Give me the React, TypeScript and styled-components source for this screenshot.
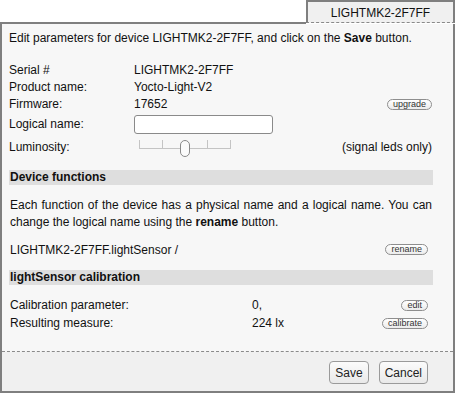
import React from "react";
import styled, { createGlobalStyle } from "styled-components";

const GlobalStyle = createGlobalStyle`
  html, body {
    margin: 0;
    padding: 0;
    background: #ffffff;
  }
  body {
    font-family: "Liberation Sans", Arial, sans-serif;
    font-size: 12px;
    color: #111111;
  }
`;

const Frame = styled.div`
  width: 455px;
  height: 393px;
  display: flex;
  flex-direction: column;
`;

const TabRow = styled.div`
  display: flex;
  height: 24px;
`;

const TabGap = styled.div`
  flex: 1;
  border-bottom: 2px solid #7f7f7f;
`;

const Tab = styled.div`
  width: 149px;
  height: 23px;
  box-sizing: border-box;
  border: 2px solid #7f7f7f;
  border-bottom: 1px dashed #8a8a8a;
  background: #f0f0f0;
  display: flex;
  align-items: center;
  justify-content: center;
  padding-top: 1px;
`;

const Panel = styled.div`
  flex: 1;
  display: flex;
  flex-direction: column;
  border: 2px solid #7f7f7f;
  border-top: none;
  background: #f0f0f0;
`;

const Body = styled.div`
  height: 328px;
  box-sizing: border-box;
  padding: 6px 0 0 7px;
  background: #f7f7f7;
  border-bottom: 1px dashed #8a8a8a;
  display: flex;
  flex-direction: column;
`;

const Content = styled.div`
  width: 424px;
  display: flex;
  flex-direction: column;
`;

const Intro = styled.div`
  line-height: 17px;
  margin-bottom: 15px;
`;

const PropGrid = styled.div`
  display: grid;
  grid-template-columns: 125px 1fr auto;
  align-items: center;
  margin-bottom: 11px;
`;

const Cell = styled.div<{ $h?: number }>`
  height: ${(p) => p.$h ?? 17}px;
  line-height: ${(p) => p.$h ?? 17}px;
  display: flex;
  align-items: center;
  white-space: nowrap;
`;

const RightCell = styled(Cell)`
  justify-content: flex-end;
  padding-right: 1px;
`;

const TextInput = styled.input`
  width: 139px;
  height: 19px;
  box-sizing: border-box;
  border: 1px solid #8a8a8a;
  border-radius: 3px;
  background: #ffffff;
  padding: 0 3px;
  margin: 0;
  font: inherit;
`;

const Slider = styled.div`
  position: relative;
  width: 92px;
  height: 19px;
  margin-left: 5px;
  margin-top: 2px;
`;

const Ticks = styled.div`
  display: flex;
  justify-content: space-between;
  height: 8px;
  margin-top: 1px;
  border-bottom: 1px solid #c4c4c4;
`;

const Tick = styled.span`
  width: 1px;
  height: 8px;
  background: #c4c4c4;
`;

const Thumb = styled.div`
  position: absolute;
  left: 41px;
  top: 1px;
  width: 10px;
  height: 17px;
  box-sizing: border-box;
  border: 1px solid #8a8a8a;
  border-radius: 5px;
  background: #fbfbfb;
`;

const SectionHeader = styled.div`
  height: 15px;
  line-height: 15px;
  background: #dedede;
  font-weight: bold;
  padding-left: 1px;
`;

const Paragraph = styled.p`
  margin: 12px 0 10px;
  line-height: 17px;
  text-align: justify;
  padding-left: 1px;
  padding-right: 1px;
`;

const FunctionRow = styled.div`
  display: flex;
  align-items: center;
  justify-content: space-between;
  height: 17px;
  padding-left: 1px;
  padding-right: 5px;
  margin-bottom: 12px;
`;

const CalibGrid = styled.div`
  display: grid;
  grid-template-columns: 242px 1fr auto;
  align-items: center;
  margin-top: 11px;
  padding-left: 1px;
`;

const CalibCell = styled.div`
  height: 18px;
  line-height: 18px;
  display: flex;
  align-items: center;
  white-space: nowrap;
`;

const CalibAction = styled(CalibCell)`
  justify-content: flex-end;
  padding-right: 5px;
`;

const MiniButton = styled.button`
  height: 11px;
  box-sizing: border-box;
  padding: 0 5px;
  margin: 0;
  border: 1px solid #8e8e8e;
  border-radius: 6px;
  background: linear-gradient(#ffffff, #ececec);
  font-family: "Liberation Sans", Arial, sans-serif;
  font-size: 9px;
  line-height: 9px;
  color: #333333;
`;

const Footer = styled.div`
  flex: 1;
  display: flex;
  justify-content: flex-end;
  align-items: flex-start;
  gap: 10px;
  padding: 9px 25px 0 0;
  background: #f0f0f0;
`;

const DialogButton = styled.button`
  height: 23px;
  box-sizing: border-box;
  padding: 0 5px;
  margin: 0;
  border: 1px solid #9a9a9a;
  border-radius: 4px;
  background: linear-gradient(#fbfbfb, #e9e9e9);
  font-family: "Liberation Sans", Arial, sans-serif;
  font-size: 12px;
  color: #222222;
`;

const App: React.FC = () => {
  const serial = "LIGHTMK2-2F7FF";

  return (
    <Frame>
      <GlobalStyle />
      <TabRow>
        <TabGap />
        <Tab>{serial}</Tab>
      </TabRow>
      <Panel>
        <Body>
          <Content>
            <Intro>
              Edit parameters for device {serial}, and click on the{" "}
              <b>Save</b> button.
            </Intro>

            <PropGrid>
              <Cell>Serial #</Cell>
              <Cell>{serial}</Cell>
              <Cell />
              <Cell>Product name:</Cell>
              <Cell>Yocto-Light-V2</Cell>
              <Cell />
              <Cell>Firmware:</Cell>
              <Cell>17652</Cell>
              <RightCell>
                <MiniButton>upgrade</MiniButton>
              </RightCell>
              <Cell $h={22}>Logical name:</Cell>
              <Cell $h={22}>
                <TextInput type="text" />
              </Cell>
              <Cell $h={22} />
              <Cell $h={24}>Luminosity:</Cell>
              <Cell $h={24}>
                <Slider>
                  <Ticks>
                    <Tick />
                    <Tick />
                    <Tick />
                    <Tick />
                    <Tick />
                  </Ticks>
                  <Thumb />
                </Slider>
              </Cell>
              <RightCell $h={24}>(signal leds only)</RightCell>
            </PropGrid>

            <SectionHeader>Device functions</SectionHeader>
            <Paragraph>
              Each function of the device has a physical name and a logical
              name. You can change the logical name using the <b>rename</b>{" "}
              button.
            </Paragraph>
            <FunctionRow>
              <span>{serial}.lightSensor /</span>
              <MiniButton>rename</MiniButton>
            </FunctionRow>

            <SectionHeader>lightSensor calibration</SectionHeader>
            <CalibGrid>
              <CalibCell>Calibration parameter:</CalibCell>
              <CalibCell>0,</CalibCell>
              <CalibAction>
                <MiniButton>edit</MiniButton>
              </CalibAction>
              <CalibCell>Resulting measure:</CalibCell>
              <CalibCell>224 lx</CalibCell>
              <CalibAction>
                <MiniButton>calibrate</MiniButton>
              </CalibAction>
            </CalibGrid>
          </Content>
        </Body>
        <Footer>
          <DialogButton>Save</DialogButton>
          <DialogButton>Cancel</DialogButton>
        </Footer>
      </Panel>
    </Frame>
  );
};

export default App;
